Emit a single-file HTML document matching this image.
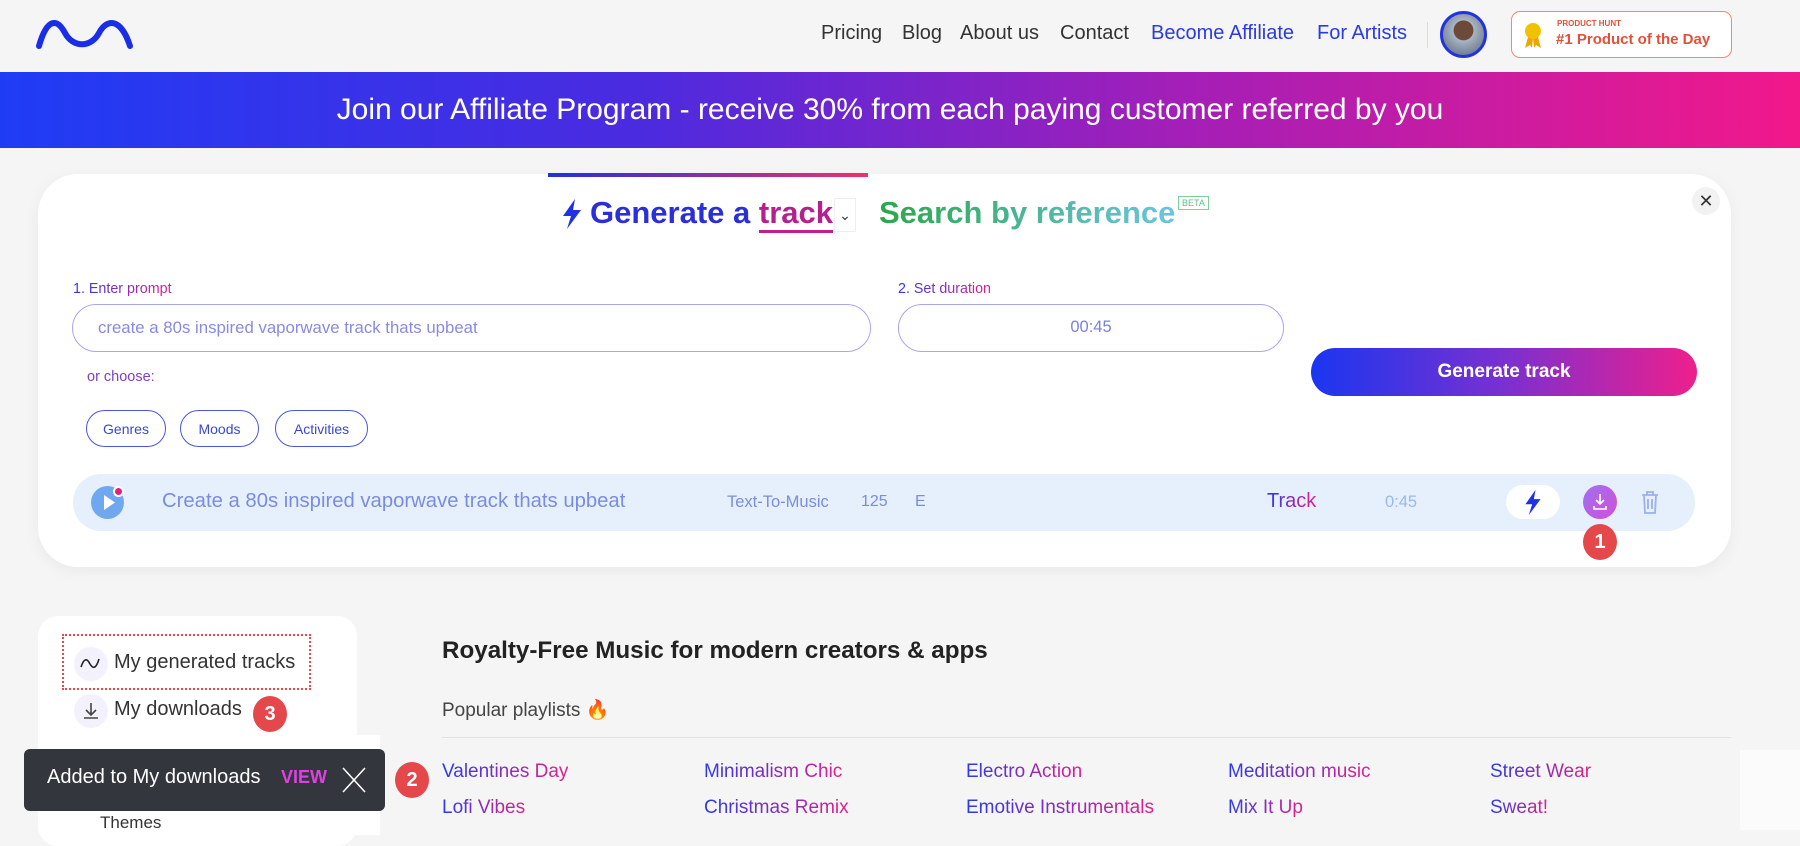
<!DOCTYPE html>
<html><head><meta charset="utf-8"><style>
*{margin:0;padding:0;box-sizing:border-box}
body{width:1800px;height:830px;overflow:hidden;background:#f5f5f5;font-family:"Liberation Sans",sans-serif;position:relative}
.a{position:absolute;white-space:nowrap}
.g{background:linear-gradient(90deg,#2a3be6,#e0208c);-webkit-background-clip:text;background-clip:text;color:transparent}
.nav{font-size:20px;color:#333;top:22px}
.chip{position:absolute;top:410px;height:37px;border:1.5px solid #4a55e0;border-radius:19px;font-size:14px;color:#3a46d8;display:flex;align-items:center;justify-content:center}
.pl{font-size:19px}
.badge{position:absolute;width:34px;height:36px;border-radius:50%;background:#e5484b;color:#fff;font-weight:bold;font-size:20px;display:flex;align-items:center;justify-content:center}
</style></head><body>
<svg class="a" style="left:35px;top:18px" width="100" height="32" viewBox="0 0 100 32"><path d="M4 28 C12 0 22 0 30 15 C38 30 56 30 64 15 C72 0 86 0 95 28" fill="none" stroke="#1a2ee8" stroke-width="6" stroke-linecap="round"/></svg>
<div class="a nav" style="left:821px">Pricing</div>
<div class="a nav" style="left:902px">Blog</div>
<div class="a nav" style="left:960px">About us</div>
<div class="a nav" style="left:1060px">Contact</div>
<div class="a nav" style="left:1151px;color:#2a3be0">Become Affiliate</div>
<div class="a nav" style="left:1317px;color:#2a3be0">For Artists</div>
<div class="a" style="left:1427px;top:22px;width:1px;height:26px;background:#ddd"></div>
<div class="a" style="left:1440px;top:11px;width:47px;height:47px;border-radius:50%;border:3px solid #2233dd;background:radial-gradient(circle at 50% 40%,#6b4a3a 0 30%,#a9b4c4 32%,#56657a 100%)"></div>
<div class="a" style="left:1511px;top:11px;width:221px;height:47px;border:1.5px solid #f08a70;border-radius:9px;background:#fff"></div>
<svg class="a" style="left:1523px;top:21px" width="20" height="28" viewBox="0 0 20 28"><path d="M5 16 L2 27 L7 24 L9 27 L10 17 M15 16 L18 27 L13 24 L11 27 L10 17" fill="#e8a800"/><circle cx="10" cy="10" r="8" fill="#f2c200"/></svg>
<div class="a" style="left:1557px;top:19px;font-size:8px;color:#e0503a;font-weight:bold">PRODUCT HUNT</div>
<div class="a" style="left:1556px;top:31px;font-size:15px;color:#e0503a;font-weight:bold">#1 Product of the Day</div>

<div class="a" style="left:0;top:72px;width:1800px;height:76px;background:linear-gradient(90deg,#1f3cf5 0%,#4a2be0 35%,#a21fb8 65%,#f2188a 100%);color:#fff;font-size:30px;display:flex;align-items:center;justify-content:center;padding-right:20px">Join our Affiliate Program - receive 30% from each paying customer referred by you</div>

<div class="a" style="left:38px;top:174px;width:1693px;height:393px;background:#fff;border-radius:40px;box-shadow:0 4px 16px rgba(0,0,0,.05)"></div>
<div class="a" style="left:548px;top:173px;width:320px;height:4px;background:linear-gradient(90deg,#2030e0,#f0306a)"></div>
<svg class="a" style="left:560px;top:198px" width="24" height="32" viewBox="0 0 24 32"><path d="M15 1 L3 18 L11 18 L7 31 L21 12 L13 12 Z" fill="#2030e8"/></svg>
<div class="a" style="left:590px;top:195px;font-size:31px;font-weight:bold;color:#2a2fd8">Generate a <span style="color:#b4208c;border-bottom:3px solid #c0208a">track</span></div>
<div class="a" style="left:834px;top:198px;width:22px;height:34px;border:1px solid #eee;font-size:14px;color:#333;text-align:center;line-height:32px">⌄</div>
<div class="a" style="left:879px;top:195px;font-size:31px;font-weight:bold;background:linear-gradient(90deg,#2aa84a,#6cc4e0);-webkit-background-clip:text;background-clip:text;color:transparent">Search by reference</div>
<div class="a" style="left:1178px;top:196px;font-size:9px;color:#5cc08a;border:1px solid #7cd0a0;padding:1px 3px">BETA</div>
<div class="a" style="left:1692px;top:187px;width:28px;height:28px;border-radius:50%;background:#f2f2f2;font-size:18px;color:#333;text-align:center;line-height:28px">✕</div>

<div class="a g" style="left:73px;top:281px;font-size:14.3px">1. Enter prompt</div>
<div class="a" style="left:72px;top:304px;width:799px;height:48px;border:1.5px solid #a9a6f0;border-radius:24px;font-size:16.8px;color:#8a8ae0;padding:13px 25px">create a 80s inspired vaporwave track thats upbeat</div>
<div class="a g" style="left:898px;top:281px;font-size:14.3px">2. Set duration</div>
<div class="a" style="left:898px;top:304px;width:386px;height:48px;border:1.5px solid #a9a6f0;border-radius:24px;font-size:16.5px;color:#7a80e0;text-align:center;line-height:45px">00:45</div>
<div class="a" style="left:1311px;top:348px;width:386px;height:48px;border-radius:24px;background:linear-gradient(90deg,#1a36f0,#7a30d0,#ee1f8c);color:#fff;font-weight:bold;font-size:19px;text-align:center;line-height:48px">Generate track</div>
<div class="a" style="left:87px;top:369px;font-size:14.5px;color:#8040c0">or choose:</div>
<div class="chip" style="left:86px;width:80px">Genres</div>
<div class="chip" style="left:180px;width:79px">Moods</div>
<div class="chip" style="left:275px;width:93px">Activities</div>

<div class="a" style="left:73px;top:474px;width:1622px;height:57px;background:#e6f0fd;border-radius:28px"></div>
<div class="a" style="left:91px;top:486px;width:33px;height:33px;border-radius:50%;background:#6fa8ee"></div>
<svg class="a" style="left:91px;top:486px" width="33" height="33"><path d="M13 9 L24 16.5 L13 24 Z" fill="#fff"/></svg>
<div class="a" style="left:113px;top:486px;width:11px;height:11px;border-radius:50%;background:#e0207a;border:2px solid #fff"></div>
<div class="a" style="left:162px;top:490px;font-size:20.3px;color:#7b8ce0">Create a 80s inspired vaporwave track thats upbeat</div>
<div class="a" style="left:727px;top:493px;font-size:16.5px;color:#7b8ce0">Text-To-Music</div>
<div class="a" style="left:861px;top:493px;font-size:16px;color:#7b8ce0">125</div>
<div class="a" style="left:915px;top:493px;font-size:16px;color:#7b8ce0">E</div>
<div class="a g" style="left:1267px;top:490px;font-size:20px">Track</div>
<div class="a" style="left:1385px;top:493px;font-size:16.5px;color:#9ab8ef">0:45</div>
<div class="a" style="left:1506px;top:485px;width:54px;height:34px;border-radius:17px;background:#fff"></div>
<svg class="a" style="left:1522px;top:489px" width="22" height="27" viewBox="0 0 24 32"><path d="M15 1 L3 18 L11 18 L7 31 L21 12 L13 12 Z" fill="#2030e8"/></svg>
<div class="a" style="left:1583px;top:485px;width:34px;height:34px;border-radius:50%;background:linear-gradient(135deg,#a070f0,#d050d8)"></div>
<svg class="a" style="left:1583px;top:485px" width="34" height="34"><path d="M17 9 V19 M13 15 L17 19 L21 15 M11 21 V24 H23 V21" fill="none" stroke="#fff" stroke-width="1.6"/></svg>
<svg class="a" style="left:1639px;top:489px" width="22" height="26" viewBox="0 0 22 26"><path d="M3 6 H19 M8 6 V3 H14 V6 M5 6 L6 24 H16 L17 6 M9 10 V20 M13 10 V20" fill="none" stroke="#9ab0ef" stroke-width="1.8"/></svg>
<div class="badge" style="left:1583px;top:524px">1</div>

<div class="a" style="left:38px;top:616px;width:319px;height:230px;background:#fff;border-radius:20px"></div>
<div class="a" style="left:62px;top:634px;width:249px;height:56px;border:2px dotted #e04a50"></div>
<div class="a" style="left:74px;top:647px;width:34px;height:34px;border-radius:50%;background:#f3f1fb"></div>
<svg class="a" style="left:79px;top:656px" width="24" height="14"><path d="M2 11 C5 2 8 2 11 8 C14 13 17 13 20 3" fill="none" stroke="#222" stroke-width="1.6"/></svg>
<div class="a" style="left:114px;top:651px;font-size:20px;color:#333">My generated tracks</div>
<div class="a" style="left:74px;top:694px;width:34px;height:34px;border-radius:50%;background:#f3f1fb"></div>
<svg class="a" style="left:79px;top:699px" width="24" height="24"><path d="M12 4 V15 M7 11 L12 16 L17 11 M5 19 H19" fill="none" stroke="#444" stroke-width="1.6"/></svg>
<div class="a" style="left:114px;top:698px;font-size:20px;color:#333">My downloads</div>
<div class="badge" style="left:253px;top:696px">3</div>

<div class="a" style="left:65px;top:735px;width:315px;height:100px;background:#fff"></div>
<div class="a" style="left:100px;top:813px;font-size:17px;color:#333">Themes</div>
<div class="a" style="left:24px;top:749px;width:361px;height:62px;background:#33363d;border-radius:6px"></div>
<div class="a" style="left:47px;top:766px;font-size:20px;color:#fff">Added to My downloads</div>
<div class="a" style="left:281px;top:767px;font-size:18px;font-weight:bold;color:#e040e0">VIEW</div>
<svg class="a" style="left:341px;top:766px" width="26" height="28"><path d="M2 2 L24 26 M24 2 L2 26" stroke="#fff" stroke-width="1.6"/></svg>
<div class="badge" style="left:395px;top:762px">2</div>

<div class="a" style="left:442px;top:637px;font-size:24.2px;font-weight:bold;color:#222">Royalty-Free Music for modern creators &amp; apps</div>
<div class="a" style="left:442px;top:698px;font-size:19px;color:#444">Popular playlists <span style="color:#f06020">🔥</span></div>
<div class="a" style="left:442px;top:737px;width:1289px;height:1px;background:#e2e2e2"></div>
<div class="a g pl" style="left:442px;top:761px">Valentines Day</div>
<div class="a g pl" style="left:704px;top:761px">Minimalism Chic</div>
<div class="a g pl" style="left:966px;top:761px">Electro Action</div>
<div class="a g pl" style="left:1228px;top:761px">Meditation music</div>
<div class="a g pl" style="left:1490px;top:761px">Street Wear</div>
<div class="a g pl" style="left:442px;top:797px">Lofi Vibes</div>
<div class="a g pl" style="left:704px;top:797px">Christmas Remix</div>
<div class="a g pl" style="left:966px;top:797px">Emotive Instrumentals</div>
<div class="a g pl" style="left:1228px;top:797px">Mix It Up</div>
<div class="a g pl" style="left:1490px;top:797px">Sweat!</div>
<div class="a" style="left:1740px;top:750px;width:60px;height:80px;background:#fbfbfb"></div>
</body></html>
